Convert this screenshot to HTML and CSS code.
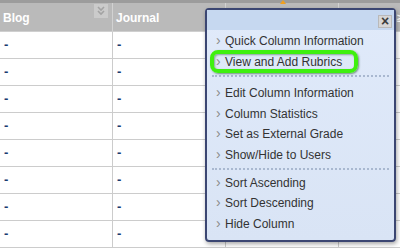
FILE: index.html
```html
<!DOCTYPE html>
<html lang="en">
<head>
  <meta charset="UTF-8" />
  <title>Grade Center</title>
  <link rel="stylesheet" href="styles.css">
</head>
<body>

  <div class="grid">
    <div class="grid-head">
      <div class="col col-blog">Blog <span class="col-menu"><svg width="10" height="10" viewBox="0 0 10 10"><path d="M2 1 L5 4 L8 1 M2 5 L5 8 L8 5" fill="none" stroke="#a3a3a3" stroke-width="1.6"/></svg></span></div>
      <div class="col col-journal">Journal</div>
      <div class="col col-three"><span class="flag"></span></div>
      <div class="col col-four"><span class="next-head">≥</span></div>
    </div>
    <div class="grid-row"><div class="col col-blog">-</div><div class="col col-journal">-</div><div class="col col-three"></div><div class="col col-four"></div></div>
    <div class="grid-row"><div class="col col-blog">-</div><div class="col col-journal">-</div><div class="col col-three"></div><div class="col col-four"></div></div>
    <div class="grid-row"><div class="col col-blog">-</div><div class="col col-journal">-</div><div class="col col-three"></div><div class="col col-four"></div></div>
    <div class="grid-row"><div class="col col-blog">-</div><div class="col col-journal">-</div><div class="col col-three"></div><div class="col col-four"></div></div>
    <div class="grid-row"><div class="col col-blog">-</div><div class="col col-journal">-</div><div class="col col-three"></div><div class="col col-four"></div></div>
    <div class="grid-row"><div class="col col-blog">-</div><div class="col col-journal">-</div><div class="col col-three"></div><div class="col col-four"></div></div>
    <div class="grid-row"><div class="col col-blog">-</div><div class="col col-journal">-</div><div class="col col-three"></div><div class="col col-four"></div></div>
    <div class="grid-row"><div class="col col-blog">-</div><div class="col col-journal">-</div><div class="col col-three"></div><div class="col col-four"></div></div>
  </div>

  <div class="context-menu">
    <div class="menu-title">
      <span class="menu-close">×</span>
    </div>
    <ul class="menu-group">
      <li>Quick Column Information</li>
      <li class="highlight">View and Add Rubrics</li>
    </ul>
    <ul class="menu-group">
      <li>Edit Column Information</li>
      <li>Column Statistics</li>
      <li>Set as External Grade</li>
      <li>Show/Hide to Users</li>
    </ul>
    <ul class="menu-group">
      <li>Sort Ascending</li>
      <li>Sort Descending</li>
      <li>Hide Column</li>
    </ul>
  </div>

</body>
</html>
```

FILE: styles.css
```css
body {
  margin: 0;
  font-family: "Liberation Sans", Arial, sans-serif;
  background-color: white;
  width: 400px;
  height: 250px;
  overflow: hidden;
  position: relative;
}

.grid {
  width: 400px;
  overflow: hidden;
}

.grid-head {
  display: flex;
  height: 28px;
  border-top: 3px solid #9c9c9c;
  border-bottom: 1px solid #cfcfcf;
  background-color: #bababa;
}

.grid-head .col {
  color: white;
  font-weight: bold;
  font-size: 12px;
  padding-top: 8px;
  padding-left: 3px;
  border-right: 1px solid #d2d2d2;
  position: relative;
}

.grid-row {
  display: flex;
  height: 26px;
  border-bottom: 1px solid #cccccc;
}

.grid-row .col {
  color: #1b3b6f;
  font-size: 13px;
  font-weight: bold;
  line-height: 26px;
  padding-left: 4px;
  border-right: 1px solid #cccccc;
}

.col {
  box-sizing: border-box;
  flex-shrink: 0;
}

.col-blog { width: 113px; }
.col-journal { width: 113px; }
.col-three { width: 113px; }
.col-four { width: 113px; }

.col-menu {
  position: absolute;
  left: 94px;
  top: 1px;
  width: 14px;
  height: 14px;
  background-color: #cbcbcb;
  display: flex;
  align-items: center;
  justify-content: center;
}

.next-head {
  padding-left: 55px;
}

.flag {
  position: absolute;
  left: 54px;
  top: -3px;
  width: 0;
  height: 0;
  border-left: 3px solid transparent;
  border-right: 3px solid transparent;
  border-bottom: 4px solid #f0a020;
}

.context-menu {
  position: absolute;
  left: 205px;
  top: 8px;
  width: 187px;
  height: 230px;
  border: 2px solid #3b4672;
  border-radius: 4px;
  background: linear-gradient(#e0eafa, #d9e4f5);
  box-shadow: 1px 2px 4px rgba(0, 0, 0, 0.35);
}

.menu-title {
  height: 20px;
  background-color: #c6d8f0;
  position: relative;
}

.menu-close {
  position: absolute;
  right: 2px;
  top: 5px;
  width: 12px;
  height: 11px;
  border: 1px solid #b9b9b9;
  background-color: #d6d6d6;
  color: #3c3c3c;
  font-size: 14px;
  font-weight: bold;
  line-height: 10px;
  text-align: center;
}

.menu-group {
  list-style: none;
  margin: 0 5px;
  padding: 0;
  border-bottom: 2px dotted #a9b8d0;
}

.menu-group li {
  height: 20.7px;
  line-height: 20.7px;
  font-size: 12px;
  color: #333;
  padding-left: 13px;
  position: relative;
}

.menu-group:nth-of-type(1) {
  padding: 1px 0 1.5px 0;
}

.menu-group:nth-of-type(1) li {
  height: 21px;
  line-height: 21px;
}

.menu-group:nth-of-type(2) {
  padding: 6.5px 0 2.5px 0;
}

.menu-group:nth-of-type(3) {
  padding-top: 2.5px;
  border-bottom: none;
}

.menu-group li::before {
  content: "›";
  position: absolute;
  left: 4px;
  top: -1px;
  color: #8a8a8a;
  font-size: 14px;
}

.menu-group li.highlight::after {
  content: "";
  position: absolute;
  left: -2px;
  top: -2px;
  width: 140px;
  height: 15px;
  border: 4px solid #3ef00f;
  border-radius: 8px;
  box-shadow: 1px 1px 2px rgba(0, 60, 0, 0.5), inset 1px 1px 2px rgba(0, 60, 0, 0.4);
}
```
